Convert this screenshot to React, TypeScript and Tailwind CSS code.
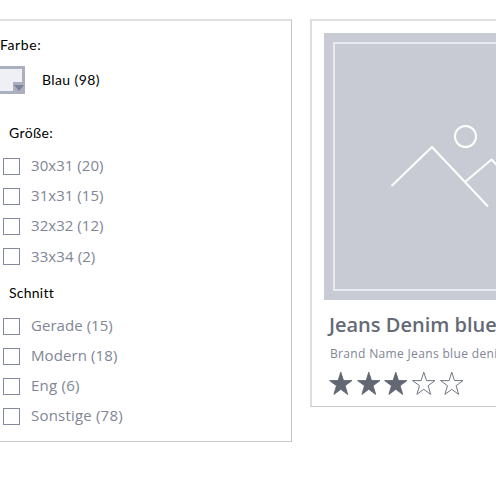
type Option = { label: string; track: string };

const sizes: Option[] = [
  { label: '30x31 (20)', track: 'mb-[2px] tracking-[0.05px]' },
  { label: '31x31 (15)', track: 'mb-[2px] tracking-[0.05px]' },
  { label: '32x32 (12)', track: 'mb-[2px] tracking-[0.05px]' },
  { label: '33x34 (2)', track: 'tracking-[0.1px]' },
];

const cuts: Option[] = [
  { label: 'Gerade (15)', track: 'mb-[2px] tracking-[0.05px]' },
  { label: 'Modern (18)', track: 'mb-[2px] tracking-[0.1px]' },
  { label: 'Eng (6)', track: 'mb-[2px] tracking-[0.25px]' },
  { label: 'Sonstige (78)', track: 'mb-[2px] tracking-[0.2px]' },
];

function Options({ items }: { items: Option[] }) {
  return (
    <ul>
      {items.map((o) => (
        <li key={o.label} className="flex h-[30px] items-center pl-[3px]">
          <span className="size-[17px] shrink-0 border border-[#85899f]" />
          <span
            className={`ml-[11px] font-['Open_Sans',sans-serif] text-[15px] leading-[20px] font-normal whitespace-nowrap text-[#808696] ${o.track}`}
          >
            {o.label}
          </span>
        </li>
      ))}
    </ul>
  );
}

function Star({ filled }: { filled: boolean }) {
  return (
    <svg width="27.7" height="26" viewBox="0 0 27.7 26" className="shrink-0">
      <path
        d="M11.8 1.2 L14.5 9.6 L23 9.6 L16.1 14.7 L18.7 23.4 L11.8 18.3 L4.9 23.4 L7.5 14.7 L0.6 9.6 L9.1 9.6 Z"
        fill={filled ? '#616773' : 'white'}
        stroke="#616773"
        strokeWidth="0.9"
      />
    </svg>
  );
}

export default function App() {
  return (
    <main className="flex h-[496px] w-[496px] items-start overflow-hidden bg-white pt-[19px] font-['Lato',sans-serif] text-[14px] leading-[20px] tracking-[0.4px] text-black">
      <section className="h-[423px] w-[292px] shrink-0 border-t-2 border-r border-b border-t-[#dedede] border-r-[#c3c3c3] border-b-[#c8c8c8]">
        <h2 className="mt-[14px] tracking-[0.6px]">Farbe:</h2>
        <div className="mt-[11px] flex h-[28px] items-center">
          <svg width="25" height="28" viewBox="0 0 25 28" className="shrink-0">
            <path d="M0 0H25V28H0Z" fill="#abafbe" />
            <path d="M0 3H22V16H13V25H0Z" fill="#eff0f5" />
            <path d="M14 19H24L19 25Z" fill="#7c829a" />
          </svg>
          <span className="ml-[17px]">Blau (98)</span>
        </div>
        <h2 className="mt-[29px] ml-[9px]">Größe:</h2>
        <div className="mt-[8px]">
          <Options items={sizes} />
        </div>
        <h2 className="mt-[12px] ml-[9px] tracking-[0.25px] [font-variant-ligatures:none]">Schnitt</h2>
        <div className="mt-[8px]">
          <Options items={cuts} />
        </div>
      </section>
      <article className="ml-[18px] h-[388px] w-[300px] shrink-0 border-t-2 border-b border-l-2 border-t-[#dedede] border-b-[#c8c8c8] border-l-[#dedede] pt-[12px] pl-[12px]">
        <div className="h-[267px] w-[283px] bg-[#c8cbd4] p-[9px]">
          <div className="h-[249px] border-2 border-[#e8eaef]">
            <svg width="180" height="245" viewBox="335 44 180 245" fill="none" stroke="white" strokeWidth="2">
              <circle cx="465.5" cy="136.5" r="10.5" />
              <path d="M391.5 186L432 147L488 206.5M465 182L491.5 159.5L515 184" />
            </svg>
          </div>
        </div>
        <h1 className="mt-[11px] ml-[5px] font-['Open_Sans',sans-serif] text-[20px] leading-[28px] font-semibold tracking-[0px] whitespace-nowrap text-[#646a76]">
          Jeans Denim blue
        </h1>
        <p className="mt-[6px] ml-[6px] font-['Open_Sans',sans-serif] text-[12px] leading-[18px] tracking-[0.34px] whitespace-nowrap text-[#808696]">
          Brand Name Jeans blue deni
        </p>
        <div className="mt-[8px] ml-[5px] flex">
          {[true, true, true, false, false].map((filled, i) => (
            <Star key={i} filled={filled} />
          ))}
        </div>
      </article>
    </main>
  );
}
